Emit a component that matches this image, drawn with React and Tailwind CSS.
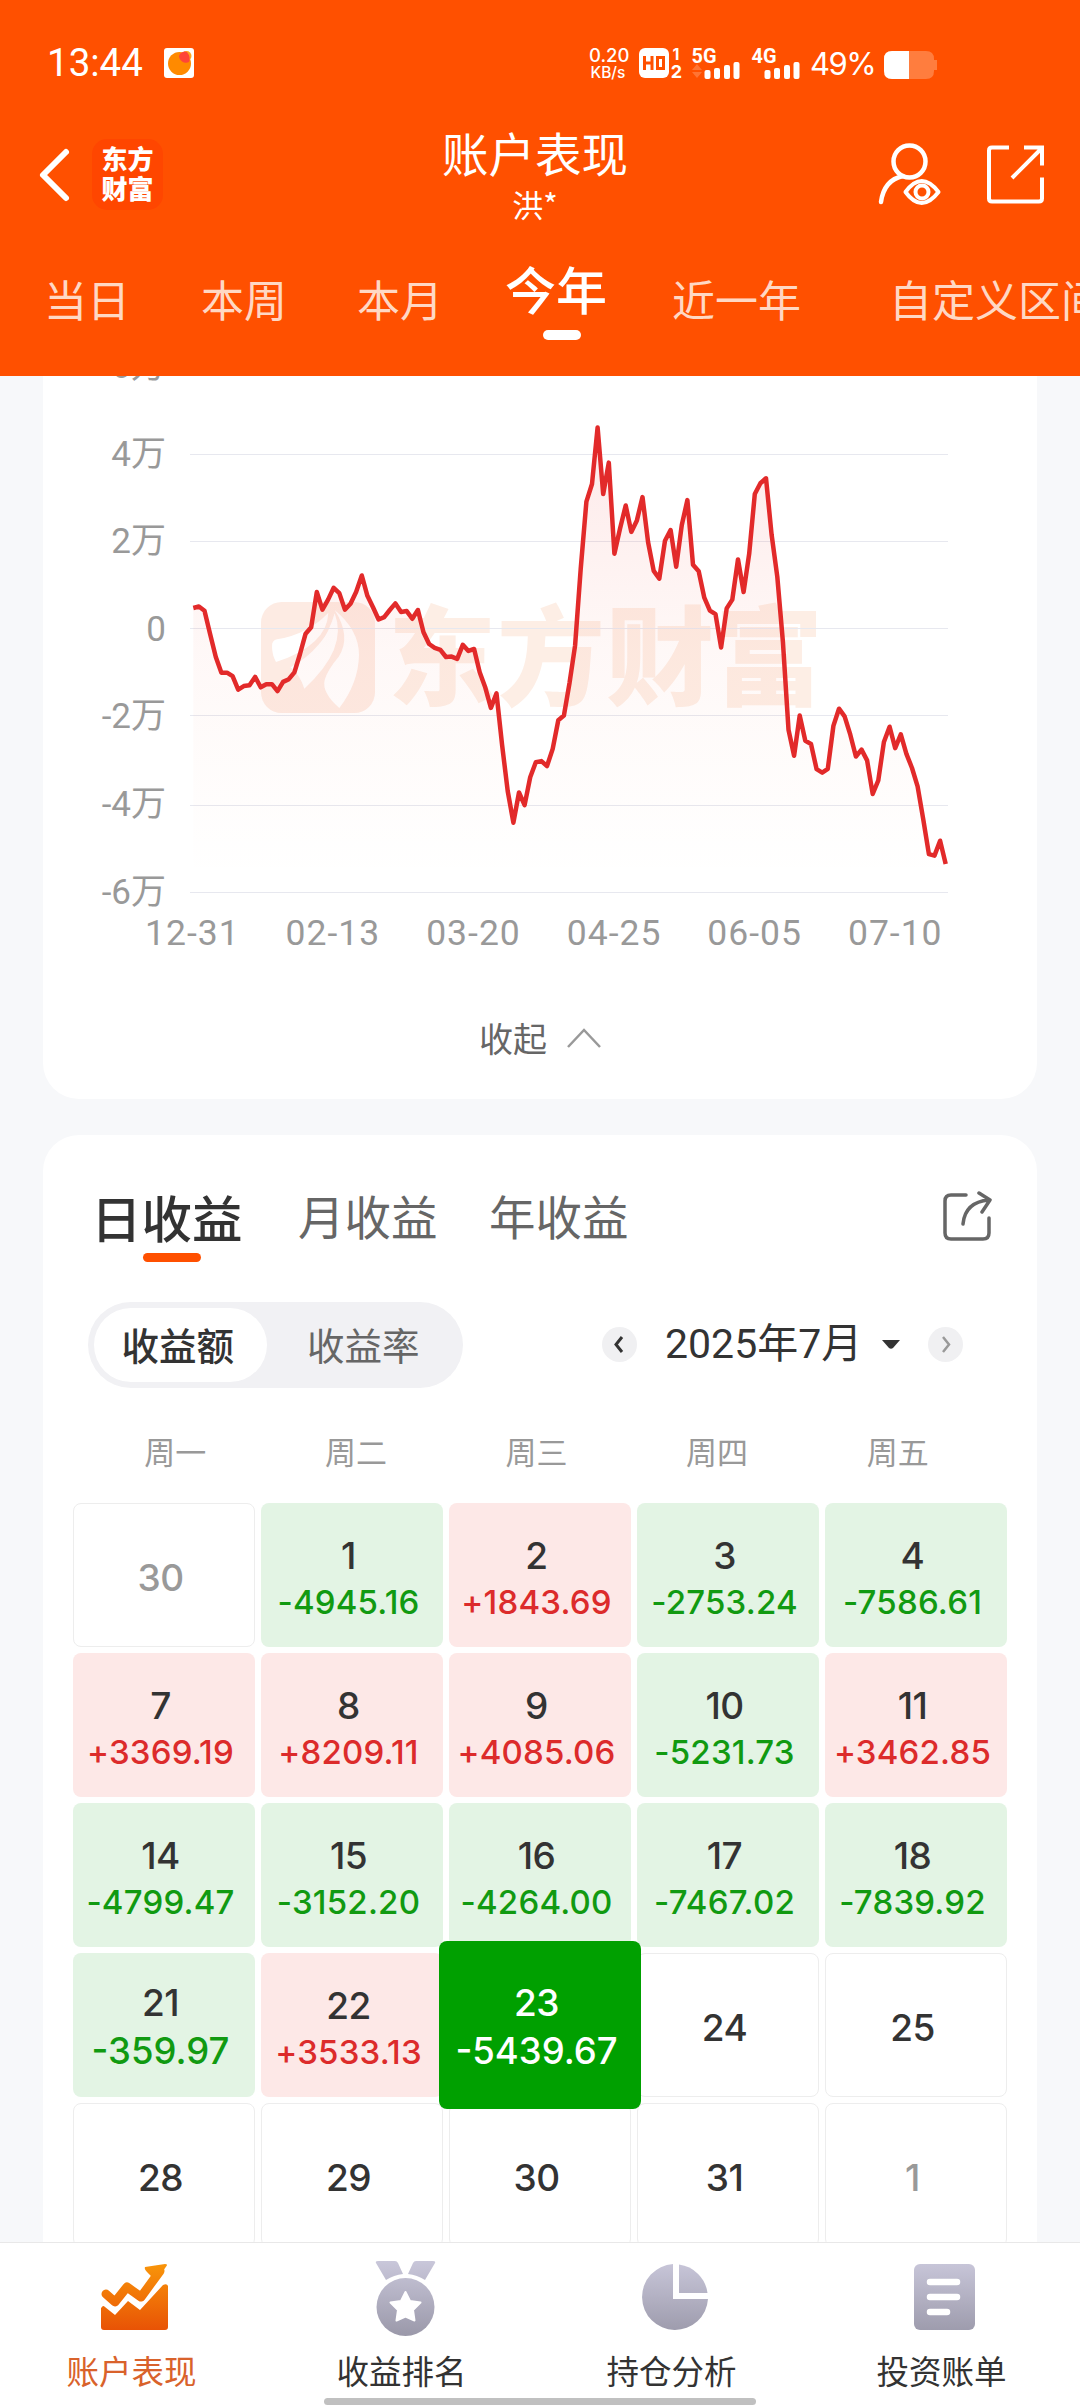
import { useState } from 'react';

// profit curve, one entry per trading day (raw chart units, top = 0)
const curve = [
  622, 618, 629, 690, 750, 791, 791, 800, 835, 826, 824, 802, 829, 821, 821, 839, 815, 808, 790, 742,
  689, 672, 580, 626, 600, 569, 583, 626, 611, 580, 537, 590, 620, 652, 646, 627, 610, 632, 630, 650,
  627, 685, 716, 726, 731, 750, 749, 755, 718, 734, 729, 790, 830, 883, 845, 980, 1100, 1183, 1104, 1137,
  1064, 1025, 1022, 1035, 990, 915, 903, 818, 720, 520, 344, 298, 150, 324, 242, 480, 415, 354, 423, 393,
  332, 450, 525, 545, 446, 418, 514, 405, 340, 509, 526, 595, 629, 638, 725, 623, 600, 495, 580, 480,
  324, 296, 283, 430, 540, 710, 940, 1008, 903, 969, 977, 1043, 1052, 1042, 930, 885, 905, 953, 1010, 992,
  1020, 1108, 1072, 972, 932, 988, 952, 1003, 1040, 1088, 1175, 1265, 1269, 1230, 1291,
];

const points = curve.map((v, i) => `${(193.3 + i * 5.615).toFixed(1)},${(370 + v / 2.613).toFixed(1)}`).join(' ');
const gridLines = [454.5, 541.5, 628.5, 715.5, 805.5, 892.5];
const yLabels = ['6万', '4万', '2万', '0', '-2万', '-4万', '-6万'];
const xLabels = ['12-31', '02-13', '03-20', '04-25', '06-05', '07-10'];

const ranges = [
  { name: '当日', cls: 'w-[157px]' },
  { name: '本周', cls: 'w-[156px]' },
  { name: '本月', cls: 'w-[148px]' },
  { name: '今年', cls: 'w-[167px]' },
  { name: '近一年', cls: 'w-[217px]' },
  { name: '自定义区间', cls: 'w-[230px]' },
];

const weekdays = ['周一', '周二', '周三', '周四', '周五'];

const days = [
  { day: 30, out: true }, { day: 1, amount: '-4945.16' }, { day: 2, amount: '+1843.69' }, { day: 3, amount: '-2753.24' }, { day: 4, amount: '-7586.61' },
  { day: 7, amount: '+3369.19' }, { day: 8, amount: '+8209.11' }, { day: 9, amount: '+4085.06' }, { day: 10, amount: '-5231.73' }, { day: 11, amount: '+3462.85' },
  { day: 14, amount: '-4799.47' }, { day: 15, amount: '-3152.20' }, { day: 16, amount: '-4264.00' }, { day: 17, amount: '-7467.02' }, { day: 18, amount: '-7839.92' },
  { day: 21, amount: '-359.97' }, { day: 22, amount: '+3533.13' }, { day: 23, amount: '-5439.67' }, { day: 24 }, { day: 25 },
  { day: 28 }, { day: 29 }, { day: 30 }, { day: 31 }, { day: 1, out: true },
];

function StatusBar() {
  return (
    <div className="flex h-[126px] items-center pl-[47px] text-white">
      <span className="w-[117px] font-[Roboto] text-[38.5px] leading-none">13:44</span>
      <svg width="30" height="30" viewBox="0 0 30 30">
        <rect width="30" height="30" rx="3" fill="#fff" />
        <circle cx="15.500" cy="15.500" r="11.500" fill="#ff8a00" />
        <circle cx="22.500" cy="8" r="5" fill="#ffa51f" />
        <path d="M15 8a6 6 0 0 1 8-4q4 5 2 10a7 7 0 0 1-10-6z" fill="#ff4538" />
      </svg>
      <div className="ml-[395px] w-[38px] text-center font-[Inter]">
        <div className="text-[18.5px] font-medium leading-[19px]">0.20</div>
        <div className="text-[15.5px] font-medium leading-[15px]">KB/s</div>
      </div>
      <svg className="ml-[11px] overflow-visible" width="46" height="32" viewBox="0 0 46 32">
        <rect x="1" y="1" width="30" height="30" rx="6" fill="#fff" />
        <path d="M6.500 9v14M14 9v14M6.500 16h7.500M19.500 10.500h6v11h-6z" fill="none" stroke="#ff5000" strokeWidth="3" />
        <text x="38" y="12.500" textAnchor="middle" fontFamily="Inter" fontSize="16" fontWeight="700" fill="#fff">1</text>
        <text x="38.500" y="31" textAnchor="middle" fontFamily="Inter" fontSize="18" fontWeight="700" fill="#fff">2</text>
      </svg>
      <Signal name="5G" arrows />
      <Signal name="4G" />
      <span className="ml-[9px] w-[74px] font-[Inter] text-[31px] leading-none tracking-[-1.5px]">49%</span>
      <svg className="mt-[3px]" width="56" height="28" viewBox="0 0 56 28">
        <path d="M8 0h34q8 0 8 8v1h3v10h-3v1q0 8-8 8H8q-8 0-8-8V8q0-8 8-8z" fill="#ff7d3e" />
        <path d="M25 0H8Q0 0 0 8v12q0 8 8 8h17z" fill="#fff" />
      </svg>
    </div>
  );
}

function Signal({ name, arrows }) {
  return (
    <svg className={arrows ? 'ml-[4px] overflow-visible' : 'ml-[7px] overflow-visible'} width="53" height="32" viewBox="0 0 53 32">
      <text x="3.500" y="16" fontFamily="Roboto" fontSize="21" fontWeight="700" fill="#fff" textLength="25" lengthAdjust="spacingAndGlyphs">{name}</text>
      {arrows && <path d="M9 17l5 6H4zM4 25h10l-5 6z" fill="#ff7433" />}
      <g fill="#fff">
        <rect x="16.500" y="23" width="6" height="9" rx="2" />
        <rect x="26" y="21" width="6" height="11" rx="2" />
        <rect x="36" y="18" width="6" height="14" rx="2" />
        <rect x="45.500" y="15" width="6" height="17" rx="2" />
      </g>
    </svg>
  );
}

function Header() {
  const [range, setRange] = useState('今年');
  return (
    <header className="relative z-10 h-[376px] shrink-0 overflow-hidden bg-[#ff5000] text-white">
      <StatusBar />
      <div className="grid h-[110px] grid-cols-[360px_360px_360px]">
        <div className="flex items-start pl-[38px] pt-[13px]">
          <svg className="mt-2" width="34" height="56" viewBox="0 0 34 56" fill="none" stroke="#fff" strokeWidth="6" strokeLinecap="round" strokeLinejoin="round">
            <path d="M28 5L5 28l23 23" />
          </svg>
          <div className="ml-5 flex h-[71px] w-[71px] flex-col items-center justify-center rounded-[15px] bg-[#ff4600] pb-1 text-[26px] font-black leading-[30px]">
            <span>东方</span>
            <span>财富</span>
          </div>
        </div>
        <div className="flex flex-col items-center pr-[10px] pt-[2px]">
          <h1 className="text-[46.5px] leading-[48px]">账户表现</h1>
          <div className="text-[31px] leading-[56px]">洪*</div>
        </div>
        <svg width="360" height="110" viewBox="720 126 360 110" fill="none" stroke="#fff" strokeWidth="4.500" strokeLinecap="round">
          <circle cx="909.500" cy="161.500" r="16" />
          <path d="M881 202q3-22 22-26" />
          <path d="M905.500 192q16-22 33 0q-17 22-33 0z" strokeWidth="4" strokeLinejoin="round" />
          <circle cx="922" cy="192" r="6.500" strokeWidth="4" />
          <path d="M1009 147.500h-17q-3 0-3 3v48q0 3 3 3h47q3 0 3-3v-21M1024 147.500h18v18M1041 149l-29 29" strokeLinecap="butt" strokeWidth="4" />
        </svg>
      </div>
      <nav className="flex items-start pl-11">
        {ranges.map((r) => (
          <button key={r.name} onClick={() => setRange(r.name)} className={`shrink-0 whitespace-nowrap text-left leading-none ${r.cls}`}>
            {range === r.name ? (
              <span className="flex w-[106px] flex-col pt-[24px]">
                <span className="text-[51px] font-medium leading-[56px]">{r.name}</span>
                <span className="ml-[38px] mt-[14px] h-[10px] w-[38px] rounded-full bg-white" />
              </span>
            ) : (
              <span className="block pt-[40px] text-[43px] leading-[44px] text-[#ffd8c4]">{r.name}</span>
            )}
          </button>
        ))}
      </nav>
    </header>
  );
}

function Chart() {
  return (
    <div>
      <div className="flex h-[577px]">
        <div className="w-[123px] text-right font-[Roboto,'Noto_Sans_CJK_SC'] text-[35px] leading-[87.6px] text-[#999]">
          {yLabels.map((l) => (
            <div key={l} className="h-[87.6px]">{l}</div>
          ))}
        </div>
        <svg className="ml-[17px]" width="772" height="577" viewBox="183 323 772 577">
          <defs>
            <linearGradient id="area" gradientUnits="userSpaceOnUse" x1="0" y1="427" x2="0" y2="880">
              <stop offset="0" stopColor="#ee2020" stopOpacity="0.1" />
              <stop offset="0.500" stopColor="#f03a20" stopOpacity="0.035" />
              <stop offset="1" stopColor="#f06020" stopOpacity="0" />
            </linearGradient>
          </defs>
          <g transform="translate(240 580) scale(0.33333)">
            <rect x="63" y="66" width="342" height="333" rx="62" fill="#fdebe3" />
            <g fill="#fff">
              <path d="M96 198q0-17 15-20Q205 162 265 98Q262 195 108 246Q96 225 96 198z" />
              <path d="M152 262Q255 205 284 100Q325 205 193 326Q180 285 152 262z" />
              <path d="M284 90Q357 150 357 225Q355 310 298 384Q245 338 254 300Q262 270 296 230Q335 170 284 90z" />
            </g>
            <path d="M196 214Q265 180 272 98" fill="none" stroke="#fdebe3" strokeWidth="10" />
          </g>
          <text x="388" y="697" fontFamily="Noto Sans CJK SC" fontSize="108" fontWeight="900" letterSpacing="1" fill="#fdeee5">东方财富</text>
          {gridLines.map((y) => (
            <path key={y} d={`M190 ${y}H948`} stroke="#e7e8ef" />
          ))}
          <polygon points={`193.3,892 ${points} 945.7,892`} fill="url(#area)" />
          <polyline points={points} fill="none" stroke="#e22a2a" strokeWidth="4.500" strokeLinejoin="round" />
        </svg>
      </div>
      <div className="ml-[79px] mt-[10px] flex h-12 items-center font-[Roboto] text-[35.5px] tracking-[1px] text-[#999]">
        {xLabels.map((l) => (
          <span key={l} className="w-[140.6px] shrink-0 text-center">{l}</span>
        ))}
      </div>
    </div>
  );
}

function DayCell({ day, amount, out }) {
  const base = 'flex h-36 flex-col items-center rounded-lg pr-[7px]';
  if (!amount) {
    return (
      <div className={`${base} justify-center border border-[#ededed] pt-1 text-[37px] font-medium leading-none tracking-[-0.5px] ${out ? 'text-[#999]' : 'text-[#333]'}`}>{day}</div>
    );
  }
  if (day === 23) {
    return (
      <div className="relative z-10 -mx-[10px] -my-3 flex h-[168px] flex-col items-center rounded-lg bg-[#00a000] pr-[7px] pt-[41px] text-white">
        <span className="text-[37px] font-medium leading-[42px] tracking-[-0.5px]">{day}</span>
        <span className="mt-[6px] text-[36.5px] font-medium leading-[42px]">{amount}</span>
      </div>
    );
  }
  const up = amount[0] === '+';
  const big = amount.length < 8;
  return (
    <div className={`${base} ${up ? 'bg-[#fde8e7]' : 'bg-[#e3f4e4]'} ${big ? 'pt-[29px]' : 'pt-8'}`}>
      <span className="text-[37px] font-medium leading-[42px] tracking-[-0.5px] text-[#333]">{day}</span>
      <span className={`font-medium ${up ? 'text-[#dc2b2b]' : 'text-[#119a11]'} ${big ? 'mt-[6px] text-[36.5px] leading-[42px]' : 'mt-[6px] text-[33px] leading-[38px] tracking-[0.2px]'}`}>{amount}</span>
    </div>
  );
}

function Calendar() {
  const [mode, setMode] = useState('收益额');
  return (
    <section className="mt-9 h-[1150px] rounded-[36px] bg-white pt-[47px]">
      <div className="flex h-[72px] items-center pl-[48px]">
        <div className="relative w-[207px] pb-1 text-[50.5px] font-medium leading-none text-[#333]">
          日收益
          <span className="absolute left-[52px] top-[62px] h-[9px] w-[58px] rounded-full bg-[#ff5000]" />
        </div>
        <div className="w-[191px] pb-[6px] text-[46.5px] leading-none text-[#666]">月收益</div>
        <div className="pb-[6px] text-[46.5px] leading-none text-[#666]">年收益</div>
        <svg className="ml-[312px]" width="54" height="54" viewBox="0 0 54 54" fill="none" stroke="#666" strokeWidth="3.500" strokeLinecap="round" strokeLinejoin="round">
          <path d="M25 4H10q-6 0-6 6v32q0 6 6 6h32q6 0 6-6V27" />
          <path d="M22 33q2-22 26-24M38 2l11 7-8 12" />
        </svg>
      </div>

      <div className="mt-12 flex items-center pl-[45px]">
        <div className="flex h-[86px] w-[375px] items-center rounded-full bg-[#f1f1f4] p-[6px] text-[37.5px] leading-none">
          {['收益额', '收益率'].map((m) => (
            <button key={m} onClick={() => setMode(m)} className={`flex h-[74px] items-center justify-center rounded-full pb-[2px] ${mode === m ? 'w-[175px] bg-white pr-[5px] font-medium text-[#333]' : 'w-[193px] pl-[3px] text-[#666]'}`}>
              {m}
            </button>
          ))}
        </div>
        <div className="ml-[139px] flex items-center pb-[2px]">
          <svg width="35" height="35" viewBox="0 0 35 35" fill="none">
            <circle cx="17.500" cy="17.500" r="17.500" fill="#f0f0f2" />
            <path d="M20 10l-6 7.500 6 7.500" stroke="#333" strokeWidth="3" />
          </svg>
          <span className="ml-7 w-[217px] whitespace-nowrap font-[Roboto,'Noto_Sans_CJK_SC'] text-[41px] leading-none text-[#333]">2025年7月</span>
          <svg width="18" height="9" viewBox="0 0 18 9"><path d="M0 0h18l-7 8q-2 1.500-4 0z" fill="#333" /></svg>
          <svg className="ml-7" width="35" height="35" viewBox="0 0 35 35" fill="none">
            <circle cx="17.500" cy="17.500" r="17.500" fill="#f0f0f2" />
            <path d="M15 10l6 7.500-6 7.500" stroke="#999" strokeWidth="2.500" />
          </svg>
        </div>
      </div>

      <div className="ml-[42px] mt-[39px] grid h-[46px] grid-cols-[repeat(5,180.6px)] items-center text-center text-[31px] leading-none text-[#999]">
        {weekdays.map((w) => <span key={w}>{w}</span>)}
      </div>
      <div className="ml-[30px] mt-[30px] grid grid-cols-[repeat(5,182px)] gap-[6px] font-[Inter]">
        {days.map((d, i) => <DayCell key={i} {...d} />)}
      </div>
    </section>
  );
}

const menu = [
  {
    name: '账户表现',
    active: true,
    icon: (
      <g fill="url(#hot)">
        <path d="M8 35L17 43 29 28 43 38 62 12" fill="none" stroke="url(#hot)" strokeWidth="9" strokeLinejoin="round" strokeLinecap="round" />
        <path d="M47 8L67 5q3 0 1.500 2L58 22l-9-9q-3-3-2-5z" />
        <path d="M4 48q1-2 3 0l10 8 13-14 12 9 23-25q4-2 5 1v41q0 3-3 3H6q-3 0-3-3V49z" />
      </g>
    ),
  },
  {
    name: '收益排名',
    icon: (
      <g fill="url(#cold)">
        <path d="M10 2h17q2 0 3 2l5 11q-9 1-17 6L8 4q-1-2 2-2zM65 2H48q-2 0-3 2l-5 11q9 1 17 6l10-17q1-2-2-2z" />
        <circle cx="37.500" cy="48" r="29" />
        <path d="M37.500 33l4.500 9 10.500 1.500-7.500 7.500 1.500 10.500-9-4-9 4 1.500-10.500-7.500-7.500L33 42z" fill="#fff" stroke="#fff" strokeWidth="2" strokeLinejoin="round" />
      </g>
    ),
  },
  {
    name: '持仓分析',
    icon: (
      <g fill="url(#cold)">
        <path d="M35 5A33 33 0 1 0 70 40H35z" />
        <path d="M41 5.500A33 33 0 0 1 69.500 34H41z" />
      </g>
    ),
  },
  {
    name: '投资账单',
    icon: (
      <g>
        <rect x="6" y="5" width="61" height="66" rx="6" fill="url(#cold)" />
        <path d="M22 23h27M22 38h27M22 53h17" stroke="#fff" strokeWidth="6.500" strokeLinecap="round" />
      </g>
    ),
  },
];

function BottomNav() {
  return (
    <nav className="relative z-20 h-[166px] shrink-0 border-t border-[#e8e8e8] bg-white">
      <div className="grid grid-cols-4">
        {menu.map((m) => (
          <div key={m.name} className="flex flex-col items-center pt-[16px]">
            <svg width="74" height="78" viewBox="0 0 74 78">
              <defs>
                <linearGradient id="hot" gradientUnits="userSpaceOnUse" x1="0" y1="4" x2="0" y2="72">
                  <stop stopColor="#f9960a" />
                  <stop offset="1" stopColor="#e85205" />
                </linearGradient>
                <linearGradient id="cold" gradientUnits="userSpaceOnUse" x1="0" y1="2" x2="0" y2="76">
                  <stop stopColor="#c9c7da" />
                  <stop offset="1" stopColor="#9b99aa" />
                </linearGradient>
              </defs>
              {m.icon}
            </svg>
            <span className={`mt-[17px] pr-[7px] text-[32.5px] leading-none ${m.active ? 'text-[#d9622b]' : 'text-[#333]'}`}>{m.name}</span>
          </div>
        ))}
      </div>
      <div className="absolute bottom-[3px] left-1/2 h-[7px] w-[432px] -translate-x-1/2 rounded-full bg-[#c0c0c0]" />
    </nav>
  );
}

export default function App() {
  return (
    <div className="flex h-[2408px] w-[1080px] flex-col overflow-hidden bg-[#f7f8fa] font-['Noto_Sans_CJK_SC',sans-serif]">
      <Header />
      <main className="-mt-[53px] h-[1919px] shrink-0 overflow-hidden px-[43px]">
        <section className="h-[776px] rounded-b-[36px] bg-white">
          <Chart />
          <button className="mx-auto mt-[56px] flex h-12 items-center gap-5 text-[34px] leading-none text-[#666]">
            收起
            <svg width="34" height="22" viewBox="0 0 34 22" fill="none" stroke="#999" strokeWidth="2.500"><path d="M1 20L17 3l16 17" /></svg>
          </button>
        </section>
        <Calendar />
      </main>
      <BottomNav />
    </div>
  );
}
